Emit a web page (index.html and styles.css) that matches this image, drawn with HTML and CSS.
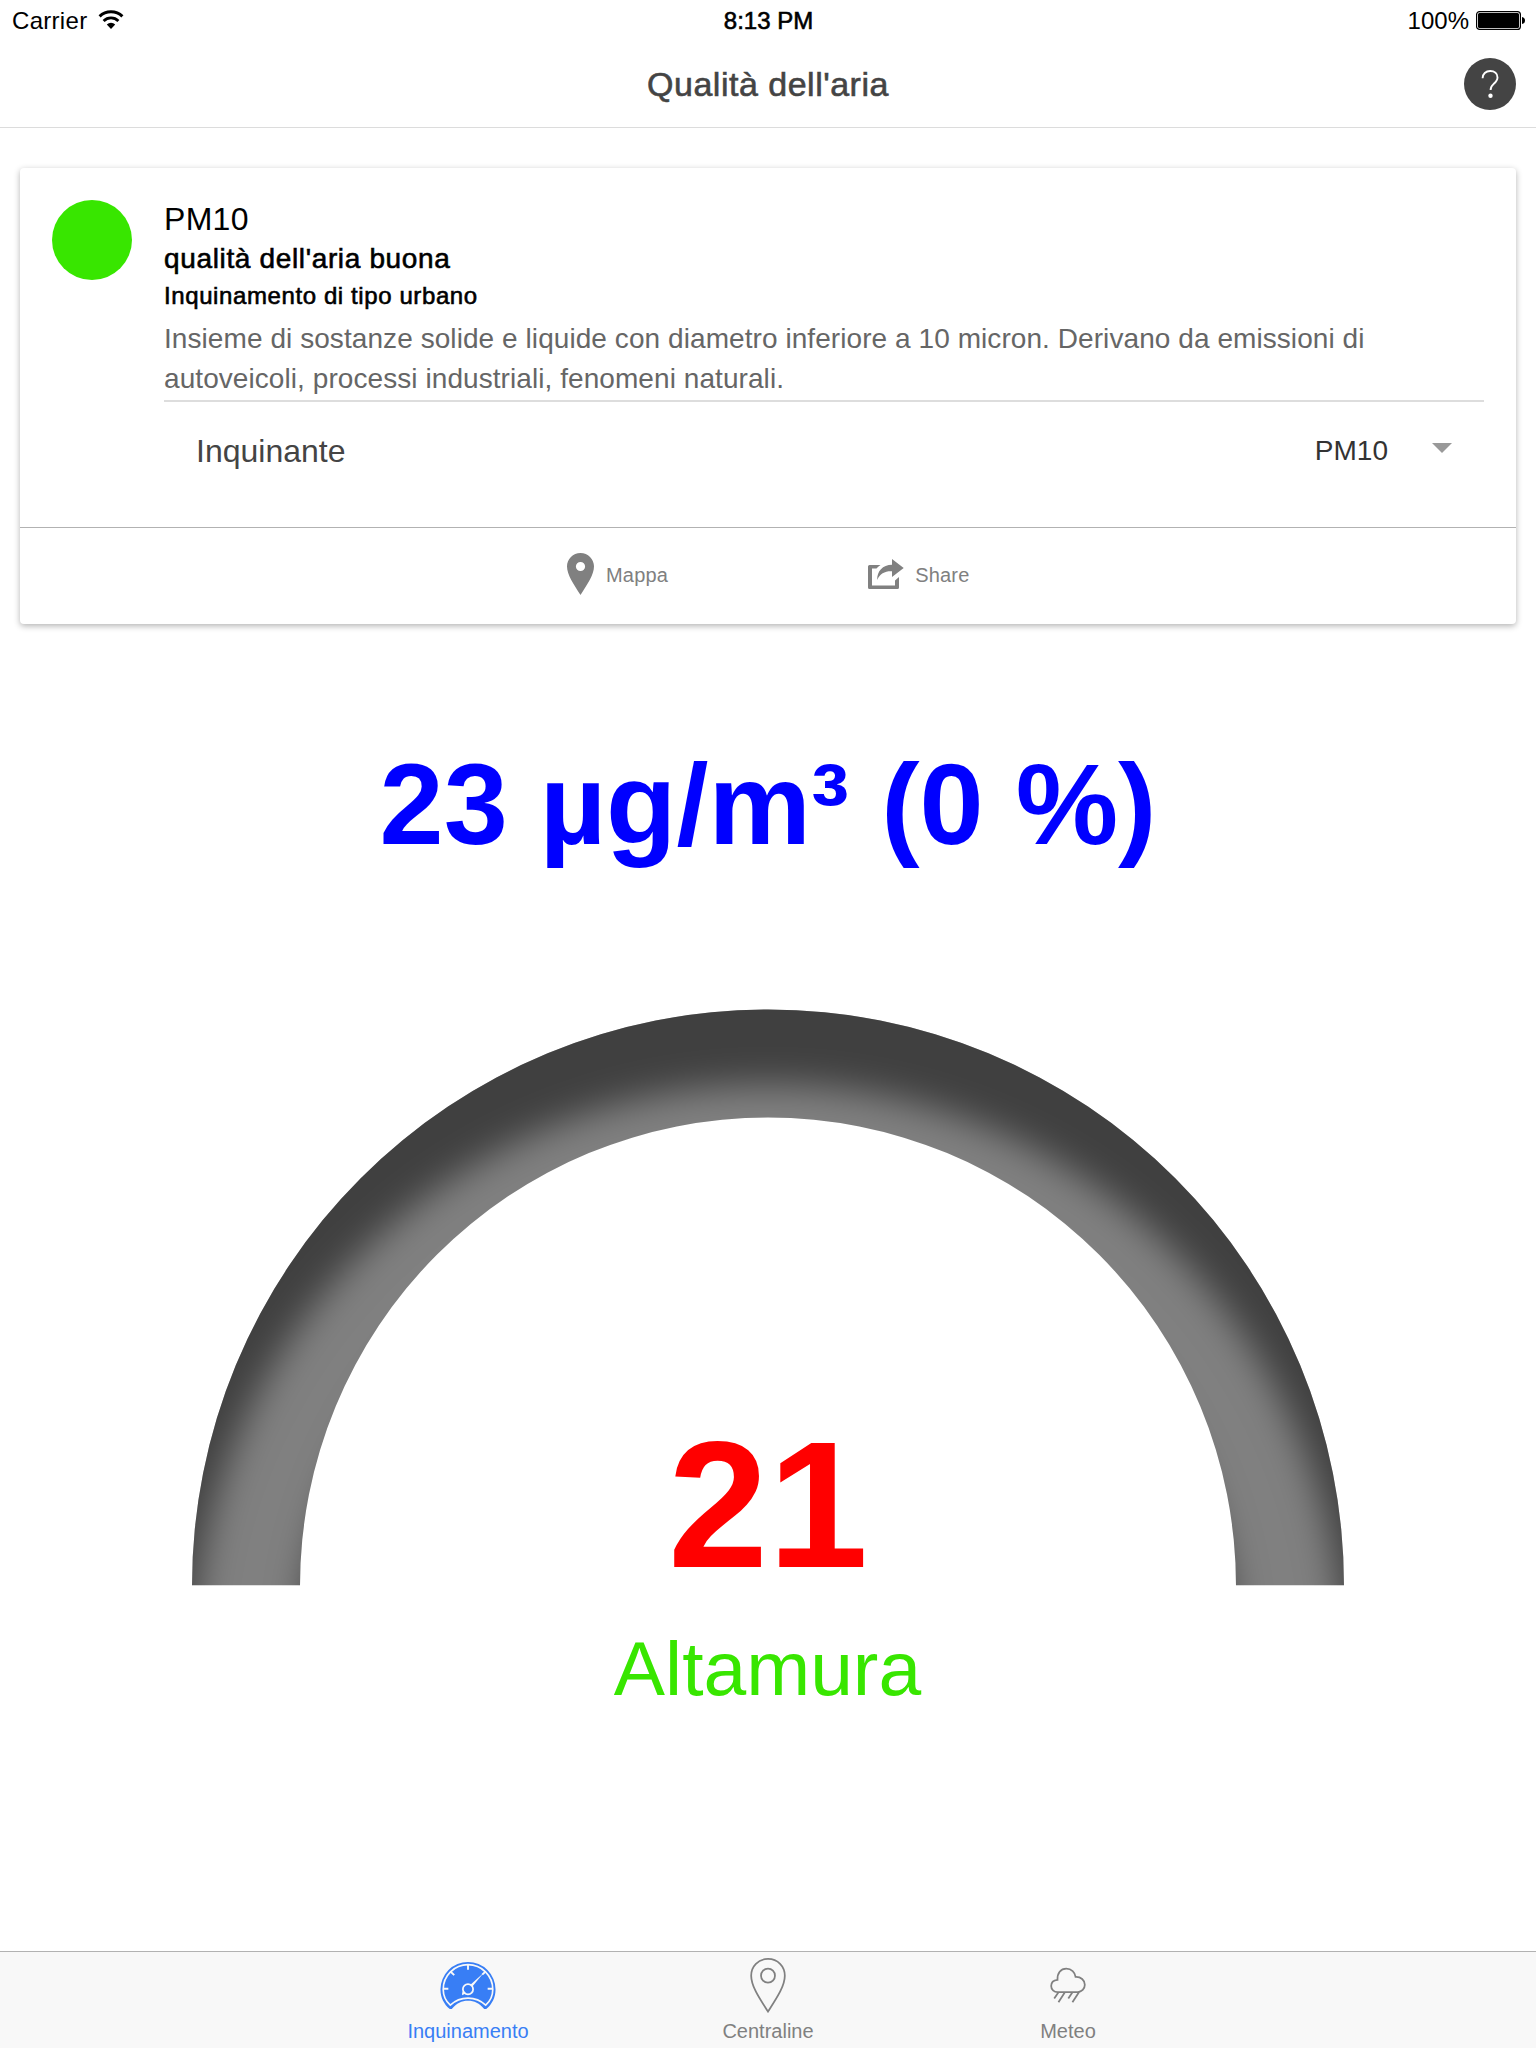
FILE: index.html
```html
<!DOCTYPE html>
<html lang="it">
<head>
<meta charset="utf-8">
<title>Qualità dell'aria</title>
<link rel="stylesheet" href="styles.css">
</head>
<body>
<header class="header">
  <div class="status">
    <div class="status-left">
      <span class="carrier">Carrier</span>
      <svg class="wifi" viewBox="0 0 26 20" width="26" height="20">
        <path d="M1.6 6.4A16.3 16.3 0 0 1 24.4 6.4" fill="none" stroke="#000" stroke-width="3"/>
        <path d="M5.6 10.9A10.6 10.6 0 0 1 20.4 10.9" fill="none" stroke="#000" stroke-width="2.8"/>
        <path d="M8.8 14.4A6.4 6.4 0 0 1 17.2 14.4L13 18.9Z" fill="#000"/>
      </svg>
    </div>
    <div class="status-time medium">8:13 PM</div>
    <div class="status-right">
      <span>100%</span>
      <svg viewBox="0 0 49 20" width="49" height="20">
        <rect x=".6" y="1.6" width="43.8" height="17.8" rx="3" fill="#fff" stroke="#000" stroke-width="1.2"/>
        <rect x="2" y="3" width="41" height="15" rx="1.5" fill="#000"/>
        <path d="M46 7Q49 7.500 49 10.500T46 14Z" fill="#000"/>
      </svg>
    </div>
  </div>
  <div class="titlebar">
    <h1 class="title medium">Qualità dell'aria</h1>
    <svg class="help" viewBox="0 0 52 52" width="52" height="52">
      <circle cx="26" cy="26" r="26" fill="#444"/>
      <path d="M18.600 20.200C18.600 15.800 21.800 13 26.200 13C30.500 13 33.500 15.700 33.500 19.500C33.500 22.700 31.600 24.300 29.500 26.100C27.300 28 26.600 29 26.600 32" fill="none" stroke="#fff" stroke-width="1.900"/>
      <circle cx="26.500" cy="37.700" r="2.200" fill="#fff"/>
    </svg>
  </div>
</header>

<main class="content">
  <section class="card">
    <div class="card-body">
      <span class="dot"></span>
      <div class="info">
        <h2 class="name">PM10</h2>
        <p class="quality medium">qualità dell'aria buona</p>
        <p class="kind medium">Inquinamento di tipo urbano</p>
        <p class="desc">Insieme di sostanze solide e liquide con diametro inferiore a 10 micron. Derivano da emissioni di<br>autoveicoli, processi industriali, fenomeni naturali.</p>
        <div class="select">
          <span class="select-label">Inquinante</span>
          <span class="select-value">PM10</span>
          <span class="caret"></span>
        </div>
      </div>
    </div>
    <div class="actions">
      <a class="action map">
        <svg viewBox="0 0 27 42" width="27" height="42">
          <path fill="#808080" fill-rule="evenodd" d="M13.500 0C6 0 0 6 0 13.300C0 22 6.500 31 13.500 42C20.500 31 27 22 27 13.300C27 6 21 0 13.500 0ZM13.500 8.900A4.600 4.600 0 1 1 13.500 18.100A4.600 4.600 0 1 1 13.500 8.900Z"/>
        </svg>
        <span>Mappa</span>
      </a>
      <a class="action share">
        <svg viewBox="0 0 36 30" width="36" height="30">
          <path fill="#808080" d="M12.500 6H1.500Q0 6 0 7.500V28.500Q0 30 1.500 30H29.500Q31 30 31 28.500V18L27 21.500V26.500H4V9.500H8.500Q10 7.500 12.500 6Z"/>
          <path fill="#808080" d="M24 0L35.700 9L24 18V12.300C17 12 12 14.500 9.200 21C9 12 14.500 6 24 5.700Z"/>
        </svg>
        <span>Share</span>
      </a>
    </div>
  </section>

  <svg class="gauge" viewBox="0 0 1152 1100" width="1152" height="1100">
    <defs>
      <filter id="inner-shadow" filterUnits="userSpaceOnUse" x="-100" y="200" width="1352" height="900" color-interpolation-filters="sRGB">
        <feOffset in="SourceAlpha" dx="0" dy="75"/>
        <feGaussianBlur stdDeviation="18" result="offset-blur"/>
        <feComposite in="SourceAlpha" in2="offset-blur" operator="out" result="inverse"/>
        <feFlood flood-color="#000" flood-opacity=".5"/>
        <feComposite in2="inverse" operator="in" result="shadow"/>
        <feComposite in="shadow" in2="SourceGraphic" operator="over"/>
      </filter>
      <clipPath id="half"><rect x="0" y="0" width="1152" height="861.500"/></clipPath>
    </defs>
    <g clip-path="url(#half)">
      <path filter="url(#inner-shadow)" fill="#808080" d="M0 861.500A576 576 0 0 1 1152 861.500H1044A468 468 0 0 0 108 861.500Z"/>
    </g>
    <text class="gauge-title" x="576" y="120">23 µg/m³ (0 %)</text>
    <text class="gauge-value" x="576" y="843">21</text>
    <text class="gauge-label" x="575.500" y="970.500">Altamura</text>
  </svg>
</main>

<nav class="tabs">
  <a class="tab active">
    <svg viewBox="0 0 60 60" width="60" height="60">
      <path fill="#387ef5" d="M11.500 55C5.500 50 2 43 2 35A28 28 0 0 1 58 35C58 43 54.500 50 48.500 55H46.500C41.500 49 36.500 46.500 30 46.500S18.500 49 13.500 55Z"/>
      <path fill="none" stroke="#f8f8f8" stroke-width="1.700" d="M12 51C7.600 47 4.800 41.500 4.800 35A25.200 25.200 0 0 1 55.200 35C55.200 41.500 52.400 47 48 51C43 46.200 37 43.800 30 43.800S17 46.200 12 51Z"/>
      <path stroke="#f8f8f8" stroke-width="1.900" d="M30 9.500V15M4.800 34.300H10M50 34.300H55.200M12.400 17L16 20.500M47.600 17L44.500 20"/>
      <circle cx="30" cy="34.800" r="5.200" fill="none" stroke="#f8f8f8" stroke-width="1.800"/>
      <path fill="#f8f8f8" d="M32.500 30.300L46 18L34.500 32ZM25.500 36.500L28 39L24 41V38.500Z"/>
    </svg>
    <span>Inquinamento</span>
  </a>
  <a class="tab">
    <svg viewBox="0 0 60 60" width="60" height="60">
      <path fill="none" stroke="#808080" stroke-width="1.800" d="M30 4C20 4 12.900 11.500 12.900 21C12.900 32 22 45 30 57.500C38 45 47.100 32 47.100 21C47.100 11.500 40 4 30 4Z"/>
      <circle cx="30" cy="21" r="7.100" fill="none" stroke="#808080" stroke-width="1.800"/>
    </svg>
    <span>Centraline</span>
  </a>
  <a class="tab">
    <svg viewBox="0 0 60 60" width="60" height="60">
      <path fill="none" stroke="#808080" stroke-width="1.800" transform="translate(0 1)" d="M19.500 36.700C15.700 36.700 12.900 34 12.900 30.500C12.900 27 15.500 24.700 19.300 24.300C19 17.500 22.500 12.900 28.300 12.900C33.500 12.900 37.200 16.500 37.700 21.300C43 21 47.100 24.500 47.100 29.300C47.100 33.500 43.800 36.700 40 36.700ZM20.500 36.700L16 43.200M27 36.700L20.300 47M34.700 36.700L30.300 43.200M41.300 36.700L34.500 47"/>
    </svg>
    <span>Meteo</span>
  </a>
</nav>
</body>
</html>
```
FILE: styles.css
```css
* { box-sizing: border-box; }

body {
  margin: 0;
  width: 1536px;
  height: 2048px;
  display: flex;
  flex-direction: column;
  overflow: hidden;
  background: #fff;
  color: #000;
  font-family: "Liberation Sans", Arial, sans-serif;
}

h1, h2, p { margin: 0; font-weight: 400; }

/* Medium weight: the regular face, slightly thickened */
.medium { -webkit-text-stroke: .6px currentColor; }

.header {
  flex: none;
  height: 128px;
  border-bottom: 1px solid #dcdcdc;
}

.status {
  display: grid;
  grid-template-columns: 1fr auto 1fr;
  align-items: center;
  height: 40px;
  padding: 0 11px 0 12px;
  font-size: 24px;
  line-height: 40px;
}
.status span, .status-time { padding-top: 2px; line-height: 38px; }
.carrier { letter-spacing: .3px; }
.status-left, .status-right { display: flex; align-items: center; gap: 11px; }
.status-right { justify-content: flex-end; gap: 7px; }

.titlebar {
  display: grid;
  grid-template-columns: 1fr auto 1fr;
  align-items: center;
  height: 88px;
  padding: 0 20px;
}
.title {
  grid-column: 2;
  font-size: 34px;
  line-height: 88px;
  letter-spacing: .5px;
  color: #444;
}
.help { justify-self: end; }

.content { flex: 1; min-height: 0; padding: 40px 20px 0; }

.card {
  height: 456px;
  border-radius: 4px;
  background: #fff;
  box-shadow: 0 2px 6px rgba(0, 0, 0, .3);
}
.card-body {
  display: flex;
  gap: 32px;
  height: 359px;
  padding: 32px;
}
.dot {
  flex: none;
  width: 80px;
  height: 80px;
  border-radius: 50%;
  background: #38e600;
}
.info { flex: 1; }
.name { font-size: 32px; line-height: 38px; letter-spacing: .3px; }
.quality { padding-top: 1px; font-size: 28px; line-height: 40px; letter-spacing: .65px; }
.kind { font-size: 24px; line-height: 34px; letter-spacing: .6px; }
.desc {
  height: 89px;
  padding-top: 6px;
  border-bottom: 2px solid #ddd;
  font-size: 28px;
  line-height: 40px;
  letter-spacing: .07px;
  color: #666;
  white-space: nowrap;
}
.select {
  display: flex;
  align-items: center;
  height: 98px;
  padding: 0 32px;
  color: #333;
}
.select-label { flex: 1; font-size: 32px; color: #444; }
.select-value { font-size: 28px; }
.caret {
  margin: 0 0 6px 44px;
  border: 10px solid transparent;
  border-top-color: #999;
  border-bottom: 0;
}

.actions {
  display: flex;
  height: 97px;
  border-top: 1px solid #b2b2b2;
  padding: 0 0 4px 547px;
  gap: 200px;
  color: #808080;
  font-size: 20px;
}
.action { display: flex; align-items: center; gap: 12px; }
.action span { padding-top: 2px; letter-spacing: .2px; }
.share { gap: 11px; }

.gauge { display: block; margin: 100px auto 0; }
.gauge text { text-anchor: middle; }
.gauge-title { font-size: 115.2px; font-weight: 700; fill: #00f; }
.gauge-value { font-size: 180px; font-weight: 700; fill: #f00; }
.gauge-label { font-size: 76.8px; fill: #38e600; }

.tabs {
  flex: none;
  display: flex;
  justify-content: center;
  height: 97px;
  border-top: 1px solid #b2b2b2;
  background: #f8f8f8;
}
.tab {
  display: flex;
  flex-direction: column;
  align-items: center;
  width: 300px;
  padding-top: 3px;
  color: #808080;
  font-size: 20px;
  line-height: 34px;
}
.tab.active { color: #387ef5; }
```
